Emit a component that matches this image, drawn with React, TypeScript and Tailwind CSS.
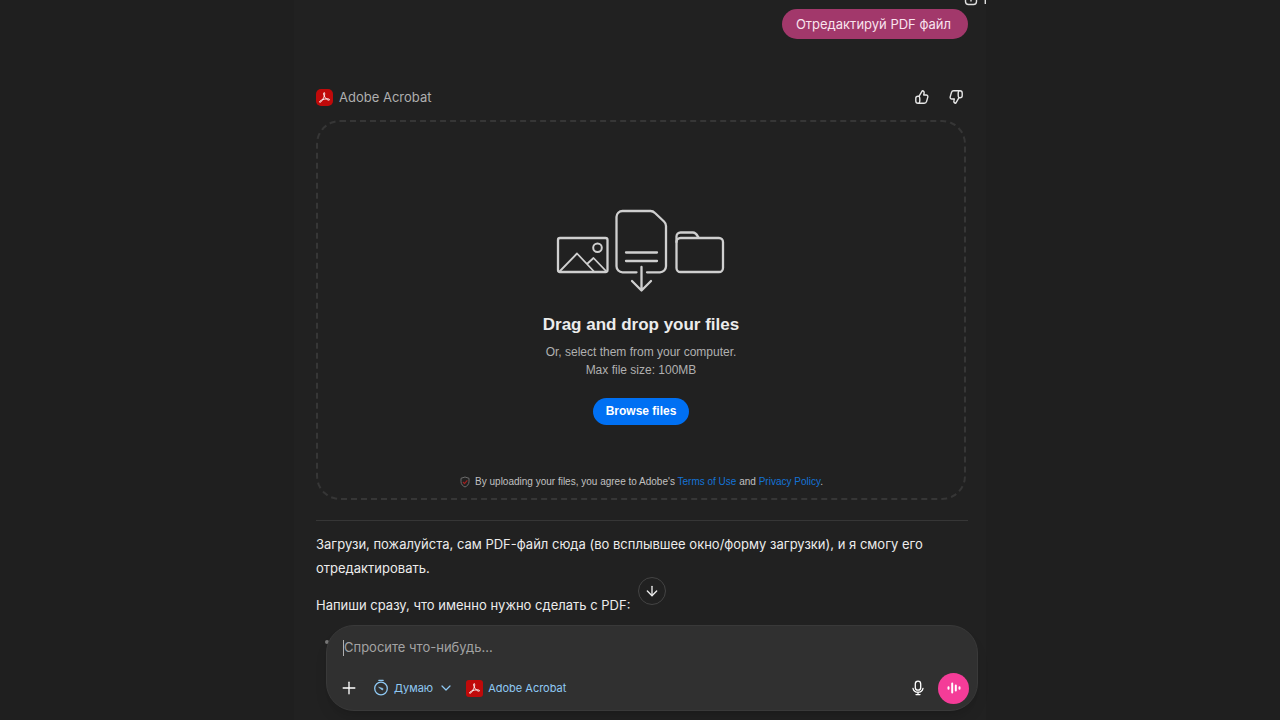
import { ArrowDown, ChevronDown, Plus } from "lucide-react";

function AcrobatIcon({ className }: { className: string }) {
  return (
    <svg viewBox="0 0 18 18" className={className} aria-hidden="true">
      <rect width="18" height="18" fill="#c00a0a" />
      <path
        d="M8.600 3.800c-.9.200-.5 2.300.3 3.800 1 2 2.700 3.900 4.300 4.200 1 .2 1.500-.4.900-.9-1.100-.9-4.500-.5-6.900.3-1.800.6-3.300 1.500-3.500 2.400-.1.600.8.700 1.500 0 1.300-1.300 2.900-4 3.600-6.200.5-1.600.600-3.700-.2-3.600z"
        fill="none"
        stroke="#fff"
        strokeWidth="1"
        strokeLinejoin="round"
      />
    </svg>
  );
}

function ThumbIcon({ className = "" }: { className?: string }) {
  return (
    <svg
      viewBox="0 0 16 16"
      className={`size-4 ${className}`}
      fill="none"
      stroke="currentColor"
      strokeWidth="1.400"
      strokeLinejoin="round"
      aria-hidden="true"
    >
      <path d="M5 7.300 8.200 1.800c1.500.1 2.200 1.100 1.900 2.300L9.700 6h2.500c1.200 0 1.900 1 1.600 2.100l-1.200 4.300c-.3 1.100-1.100 1.900-2.300 1.900H4c-1.300 0-2.200-.9-2.200-2.200V9.200C1.800 8 2.700 7.300 4 7.300h1z" />
      <path d="M5 7.300c.7.800.8 1.500.8 2.500v2.300c0 1-.3 1.600-.9 2.200" />
    </svg>
  );
}

function UploadArt() {
  return (
    <svg
      viewBox="0 0 170 84"
      className="h-[84px] w-[170px]"
      fill="none"
      stroke="#cfcfcf"
      strokeWidth="2.300"
      strokeLinecap="round"
      strokeLinejoin="round"
      aria-hidden="true"
    >
      <rect x="2" y="29" width="49.500" height="34" rx="2" />
      <circle cx="41.500" cy="38.800" r="4.300" strokeWidth="2" />
      <path d="m4 62 17-17.500L37.500 62M31 55l6.500-6L50 62" strokeWidth="1.800" />
      <path d="M80.500 63.300h-14a6 6 0 0 1-6-6V8a6 6 0 0 1 6-6h28c2 0 3 .5 4.500 2l9 8.500c1.300 1.200 2 2.500 2 4.500v40.300a6 6 0 0 1-6 6H91" />
      <path d="M70 43.500h31M70 52h31" />
      <path d="M85.500 58v23M76 72l9.500 9.500L95 72" />
      <rect x="120.500" y="29" width="46.500" height="34" rx="4" />
      <path d="M120.500 33v-5.500a4 4 0 0 1 4-4H137c3 0 4 2.500 5.500 5" />
    </svg>
  );
}

function ShieldIcon() {
  return (
    <svg viewBox="0 0 12 12" className="size-3" fill="none" aria-hidden="true">
      <path
        d="M6 1 10 2.300v3.400c0 2.500-1.600 4.200-4 5.300-2.400-1.100-4-2.800-4-5.300V2.300z"
        stroke="#6c6c6c"
        strokeLinejoin="round"
      />
      <path d="m4 6 1.500 1.600L8.300 4.300" stroke="#a32020" strokeWidth="1.200" />
    </svg>
  );
}

function TimerIcon() {
  return (
    <svg
      viewBox="0 0 16 18"
      className="h-[18px] w-4"
      fill="none"
      stroke="currentColor"
      strokeWidth="1.300"
      strokeLinecap="round"
      aria-hidden="true"
    >
      <circle cx="8" cy="9.500" r="6.300" />
      <path d="M5.800 1.300h4.400" />
      <path d="m6 8.300 3.800 1.100a.8.800 0 1 1-1 1.300z" fill="currentColor" strokeWidth=".6" />
    </svg>
  );
}

function MicIcon() {
  return (
    <svg
      viewBox="0 0 16 16"
      className="size-4"
      fill="none"
      stroke="currentColor"
      strokeWidth="1.300"
      strokeLinecap="round"
      aria-hidden="true"
    >
      <rect x="5.300" y="1.200" width="5.400" height="9" rx="2.700" />
      <path d="M3 8.300c.5 2.400 2.500 3.900 5 3.900s4.500-1.500 5-3.900M8 12.200v2.300M6 14.600h4" />
    </svg>
  );
}

function VoiceIcon() {
  return (
    <svg
      viewBox="0 0 16 16"
      className="size-4"
      stroke="currentColor"
      strokeWidth="2"
      strokeLinecap="round"
      aria-hidden="true"
    >
      <path d="M2.500 7.200v1.600M6.200 3.500v9M9.800 5.500v5M13.500 7.200v1.600" />
    </svg>
  );
}

function DropZone() {
  return (
    <section className="mt-[13px] mr-[2px] flex h-[380px] flex-col items-center rounded-3xl border-2 border-dashed border-[#363636] pt-[87px] font-['Liberation_Sans',Arial,sans-serif]">
      <UploadArt />
      <h2 className="mt-5 text-[17px] leading-6 font-bold text-[#ececec]">
        Drag and drop your files
      </h2>
      <p className="mt-[6px] text-center text-xs leading-[18px] text-[#b0b0b0]">
        Or, select them from your computer.
        <br />
        Max file size: 100MB
      </p>
      <button
        type="button"
        className="mt-[19px] h-[27px] rounded-full bg-[#0070f3] px-[13px] pb-[2px] text-xs font-bold text-white"
      >
        Browse files
      </button>
      <p className="mt-auto mb-2 flex items-center gap-1 text-[10px] leading-4 text-[#c0c0c0]">
        <ShieldIcon />
        <span>
          By uploading your files, you agree to Adobe's{" "}
          <a href="#terms" className="text-[#1473d6]">
            Terms of Use
          </a>{" "}
          and{" "}
          <a href="#privacy" className="text-[#1473d6]">
            Privacy Policy
          </a>
          .
        </span>
      </p>
    </section>
  );
}

function Composer() {
  return (
    <form className="rounded-[28px] border border-[#393939] bg-[#303030] px-4 pt-[14px] pb-[6px] shadow-lg">
      <input
        type="text"
        aria-label="Сообщение"
        placeholder="Спросите что-нибудь..."
        className="block h-4 w-full border-l border-[#b0b0b0] bg-transparent text-[13px] text-white outline-none placeholder:text-[#a3a3a3]"
      />
      <div className="mt-4 -mr-2 flex h-8 items-center text-[11px] text-[#8fc9f4]">
        <button type="button" aria-label="Добавить" className="-ml-1 text-white">
          <Plus className="size-5" strokeWidth={1.6} />
        </button>
        <button type="button" className="ml-[14px] flex items-center gap-[5px]">
          <TimerIcon />
          Думаю
          <ChevronDown className="size-4" strokeWidth={1.8} />
        </button>
        <button type="button" className="ml-3 flex items-center gap-[5px]">
          <AcrobatIcon className="size-[17px] rounded-[3px]" />
          Adobe Acrobat
        </button>
        <button type="button" aria-label="Диктовка" className="ml-auto text-white">
          <MicIcon />
        </button>
        <button
          type="button"
          aria-label="Голосовой режим"
          className="ml-3 flex size-[31px] items-center justify-center rounded-full bg-[#f43c98] text-white"
        >
          <VoiceIcon />
        </button>
      </div>
    </form>
  );
}

export default function App() {
  return (
    <div className="flex h-screen justify-center overflow-hidden bg-[#1f1f1f] font-[Inter,'Noto_Sans',sans-serif]">
      <main className="relative w-full max-w-[692px] bg-[#212121] pr-[18px] pl-[22px] text-[#ececec]">
        <svg
          viewBox="0 0 24 7"
          className="absolute top-0 right-0 h-[7px] w-6"
          fill="none"
          stroke="#e0e0e0"
          strokeWidth="1.400"
          aria-hidden="true"
        >
          <path d="M3.500 0v1.500c0 2 1 3 3 3h5c2 0 3-1 3-3V0M9 0v1.500M23.300 0v4" />
        </svg>

        <div className="flex justify-end pt-[9px]">
          <p className="rounded-full bg-[#a2386b] pr-[17px] pl-[14px] text-[13px] leading-[30px] text-[#f9e3ee]">
            Отредактируй PDF файл
          </p>
        </div>

        <header className="mt-12 flex h-5 items-center text-[13px] text-[#afafaf]">
          <AcrobatIcon className="mr-[6px] size-[17px] rounded-[5px]" />
          <span className="pt-[2px]">Adobe Acrobat</span>
          <div className="mr-1 ml-auto flex gap-[18px] text-[#e6e6e6]">
            <button type="button" aria-label="Хороший ответ">
              <ThumbIcon />
            </button>
            <button type="button" aria-label="Плохой ответ">
              <ThumbIcon className="rotate-180" />
            </button>
          </div>
        </header>

        <DropZone />
        <hr className="mt-5 border-[#363636]" />

        <article className="mt-[11px] text-[13px] leading-6">
          <p>
            Загрузи, пожалуйста, сам PDF-файл сюда (во всплывшее окно/форму загрузки), и я смогу его
            отредактировать.
          </p>
          <p className="mt-[13px]">Напиши сразу, что именно нужно сделать с PDF:</p>
          <ul className="mt-3 ml-6 list-disc marker:text-[#777]">
            <li>&nbsp;</li>
          </ul>
        </article>

        <div className="absolute inset-x-0 bottom-0 flex flex-col items-center pr-2 pb-[9px] pl-8">
          <button
            type="button"
            aria-label="Прокрутить вниз"
            className="mb-5 flex size-7 items-center justify-center rounded-full border border-[#444] bg-[#212121]"
          >
            <ArrowDown className="size-4" strokeWidth={2} />
          </button>
          <div className="w-full">
            <Composer />
          </div>
        </div>
      </main>
    </div>
  );
}
